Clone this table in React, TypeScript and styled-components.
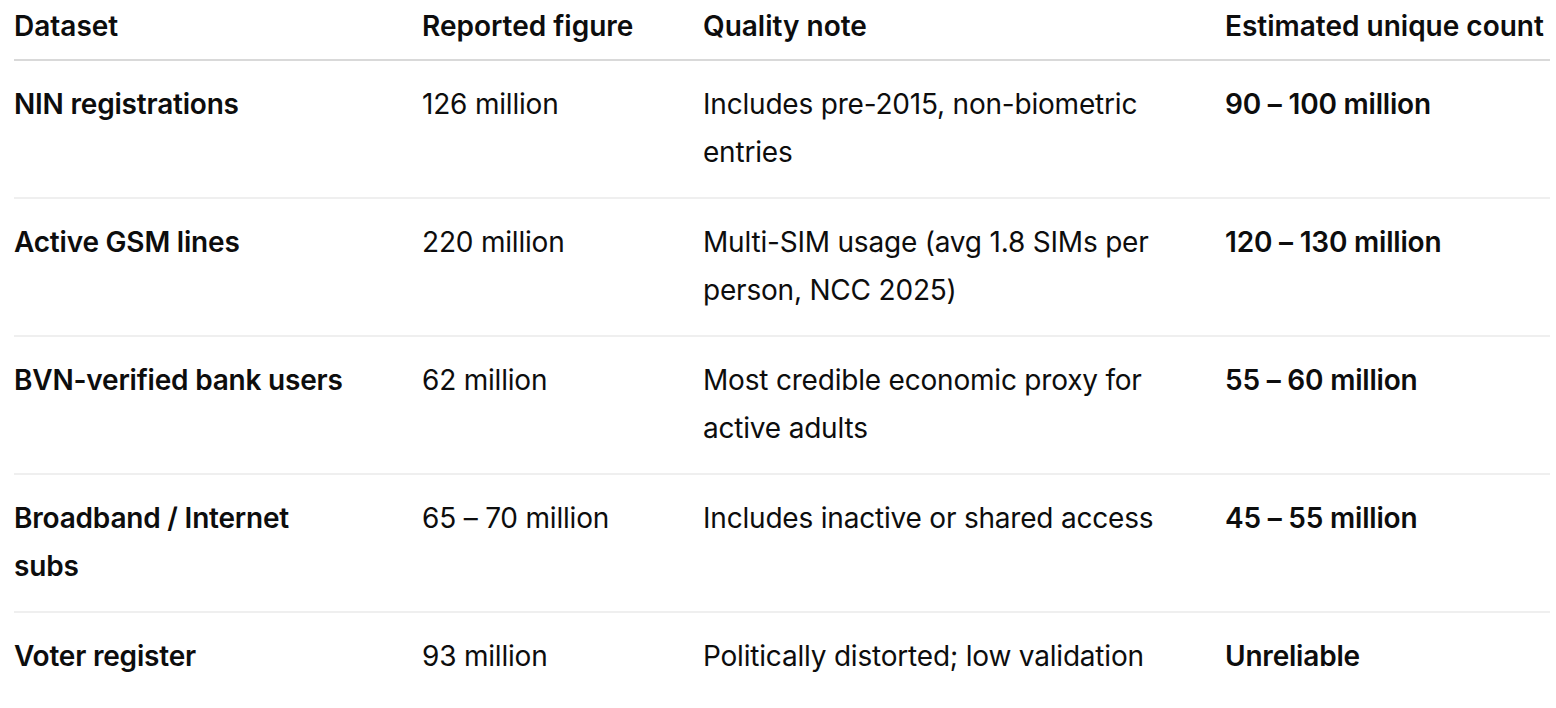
import styled, { createGlobalStyle } from 'styled-components';

const GlobalStyle = createGlobalStyle`
  html, body {
    margin: 0;
    padding: 0;
    background: #ffffff;
  }

  body {
    font-family: Inter, 'Noto Sans', 'Liberation Sans', sans-serif;
    color: #0d0d0d;
    -webkit-font-smoothing: antialiased;
  }
`;

const Page = styled.div`
  padding: 0 6px 0 14px;
`;

const Table = styled.div`
  display: grid;
  grid-template-columns: 408px 281px 522px 1fr;
  width: 1536px;
`;

const HeadCell = styled.div`
  padding: 2px 0 9px 0;
  font-size: 28px;
  line-height: 48px;
  font-weight: 600;
  white-space: nowrap;
  border-bottom: 2px solid #d9d9d9;
`;

const Cell = styled.div<{ $bold?: boolean; $last?: boolean; $gap?: number }>`
  padding: 19px ${(p) => p.$gap ?? 16}px 21px 0;
  font-size: 28px;
  line-height: 48px;
  letter-spacing: -0.2px;
  font-weight: ${(p) => (p.$bold ? 600 : 400)};
  border-bottom: ${(p) => (p.$last ? 'none' : '2px solid #efefef')};
`;

const rows = [
  {
    dataset: 'NIN registrations',
    reported: '126 million',
    note: 'Includes pre-2015, non-biometric entries',
    estimate: '90 – 100 million',
  },
  {
    dataset: 'Active GSM lines',
    reported: '220 million',
    note: 'Multi-SIM usage (avg 1.8 SIMs per person, NCC 2025)',
    estimate: '120 – 130 million',
  },
  {
    dataset: 'BVN-verified bank users',
    reported: '62 million',
    note: 'Most credible economic proxy for active adults',
    estimate: '55 – 60 million',
  },
  {
    dataset: 'Broadband / Internet subs',
    reported: '65 – 70 million',
    note: 'Includes inactive or shared access',
    estimate: '45 – 55 million',
  },
  {
    dataset: 'Voter register',
    reported: '93 million',
    note: 'Politically distorted; low validation',
    estimate: 'Unreliable',
  },
];

export default function App() {
  return (
    <Page>
      <GlobalStyle />
      <Table>
        <HeadCell>Dataset</HeadCell>
        <HeadCell>Reported figure</HeadCell>
        <HeadCell>Quality note</HeadCell>
        <HeadCell>Estimated unique count</HeadCell>
        {rows.map((r, i) => {
          const last = i === rows.length - 1;
          return [
            <Cell key={`${i}-a`} $bold $last={last} $gap={64}>{r.dataset}</Cell>,
            <Cell key={`${i}-b`} $last={last}>{r.reported}</Cell>,
            <Cell key={`${i}-c`} $last={last}>{r.note}</Cell>,
            <Cell key={`${i}-d`} $bold $last={last}>{r.estimate}</Cell>,
          ];
        })}
      </Table>
    </Page>
  );
}
